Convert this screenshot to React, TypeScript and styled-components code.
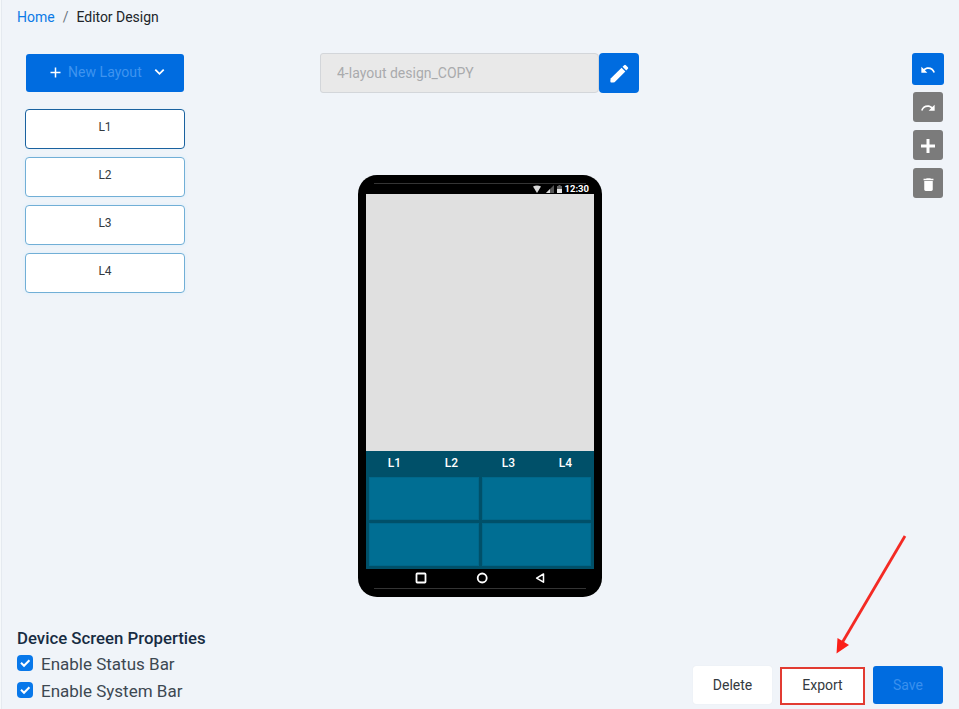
import React from "react";
import styled, { createGlobalStyle } from "styled-components";
import { MdUndo, MdRedo, MdDelete } from "react-icons/md";

const GlobalStyle = createGlobalStyle`
  * { box-sizing: border-box; }
  html, body { margin: 0; padding: 0; overflow: hidden; }
  body { background: #f0f4f9; }
  button, input { font-family: inherit; margin: 0; }
`;

const Page = styled.div`
  position: relative;
  width: 959px;
  height: 709px;
  display: flex;
  flex-direction: column;
  overflow: hidden;
  background: #f0f4f9;
  border-left: 1px solid #f6f9fb;
  box-shadow: inset 1px 0 0 #e5eaf0;
  font-family: Roboto, "Liberation Sans", sans-serif;
  color: #212529;
`;

const Breadcrumb = styled.nav`
  height: 53px;
  padding: 8px 0 0 16px;
  display: flex;
  gap: 8px;
  font-size: 14px;
  line-height: 19px;
`;

const HomeLink = styled.a`
  color: #0b7ae6;
`;

const Slash = styled.span`
  color: #6c757d;
`;

const CurrentPage = styled.span`
  letter-spacing: -0.03px;
`;

const Workspace = styled.main`
  display: grid;
  grid-template-columns: 319px 319px 1fr;
  height: 573px;
`;

const LayoutColumn = styled.aside`
  display: flex;
  flex-direction: column;
  gap: 8px;
  padding-left: 24px;
`;

const NewLayoutButton = styled.button`
  width: 158px;
  height: 38px;
  margin: 1px 1px 9px;
  padding: 0 19px 2px 24px;
  display: flex;
  align-items: center;
  border: 0;
  border-radius: 3px;
  background: #006ce0;
  color: #3f94ef;
  font-size: 14px;
  letter-spacing: 0.05px;
`;

const NewLayoutText = styled.span`
  flex: 1;
  padding: 0 0 0 7px;
  text-align: left;
  white-space: nowrap;
`;

const LayoutButton = styled.button<{ $selected?: boolean }>`
  width: 160px;
  height: 40px;
  padding: 0 0 4px;
  border: 1px solid ${(p) => (p.$selected ? "#1a629f" : "#71afd6")};
  border-radius: 4px;
  background: #fff;
  box-shadow: 0 0 4px ${(p) => (p.$selected ? "#e7f3fc" : "#dceffc")};
  color: #343a40;
  font-size: 12px;
`;

const Center = styled.section`
  display: flex;
  flex-direction: column;
  align-items: center;
`;

const NameBar = styled.div`
  display: flex;
  width: 319px;
  height: 40px;
`;

const NameInput = styled.input`
  width: 279px;
  height: 40px;
  padding: 0 16px 1px;
  border: 1px solid #d3d6da;
  border-radius: 3px 4px 4px 3px;
  background: #e9e9e9;
  color: #a9abad;
  font-size: 14px;
`;

const EditButton = styled.button`
  width: 40px;
  height: 40px;
  padding: 0;
  display: grid;
  place-items: center;
  border: 0;
  border-radius: 4px;
  background: #006ce0;
`;

const Phone = styled.div`
  width: 244px;
  height: 422px;
  margin: 82px 0 0 1px;
  padding: 8px;
  display: flex;
  flex-direction: column;
  border-radius: 19px;
  background: #000;
`;

const StatusBar = styled.div`
  height: 11px;
  padding-right: 5px;
  display: flex;
  justify-content: flex-end;
  align-items: center;
  background: linear-gradient(#343434, #343434) center top / 212px 1px no-repeat;
  color: #fff;
  font-size: 9.5px;
  font-weight: 700;
  line-height: 11px;
`;

const Clock = styled.span`
  margin-left: 1px;
`;

const Canvas = styled.div`
  height: 257px;
  background: #e0e0e0;
`;

const KeyArea = styled.div`
  height: 118px;
  background: #005069;
`;

const TabRow = styled.div`
  height: 26px;
  padding-bottom: 2px;
  display: grid;
  grid-template-columns: repeat(4, 1fr);
  align-items: center;
  text-align: center;
  color: #fff;
  font-size: 12px;
  font-weight: 500;
`;

const KeyGrid = styled.div`
  height: 89px;
  padding: 0 3px;
  display: grid;
  grid-template-columns: 1fr 1fr;
  grid-template-rows: 43px 43px;
  gap: 3px;
`;

const Key = styled.div`
  background: #006e93;
  border: 1px solid #00678a;
`;

const SystemBar = styled.div`
  height: 20px;
  padding: 0 48px 2px 49px;
  display: flex;
  justify-content: space-between;
  align-items: center;
  background: linear-gradient(#343434, #343434) center bottom / 212px 1px no-repeat;
`;

const Tools = styled.aside`
  display: flex;
  flex-direction: column;
  align-items: flex-end;
  gap: 8px;
  padding-right: 16px;
`;

const ToolButton = styled.button<{ $primary?: boolean }>`
  width: ${(p) => (p.$primary ? 32 : 30)}px;
  height: ${(p) => (p.$primary ? 32 : 30)}px;
  margin: ${(p) => (p.$primary ? "0 -1px -1px 0" : "0")};
  padding: 2px 0 0;
  display: grid;
  place-items: center;
  border: 0;
  border-radius: 3px;
  background: ${(p) => (p.$primary ? "#006ce0" : "#7b7b7b")};
  color: #fff;
`;

const Footer = styled.footer`
  height: 83px;
  padding: 0 16px;
  display: flex;
  justify-content: space-between;
`;

const Properties = styled.section`
  display: flex;
  flex-direction: column;
`;

const PropertiesTitle = styled.h2`
  margin: 0;
  color: #172c43;
  font-size: 16.8px;
  font-weight: 500;
  line-height: 25px;
`;

const CheckRow = styled.label`
  height: 26.5px;
  display: flex;
  align-items: center;
  gap: 8px;
  color: #3d4852;
  font-size: 17px;
  line-height: 26px;
`;

const CheckBox = styled.span`
  width: 16px;
  height: 16px;
  margin-bottom: 2px;
  display: grid;
  place-items: center;
  border-radius: 4px;
  background: #0878ea;
`;

const Actions = styled.div`
  display: flex;
  gap: 8px;
  padding-top: 40px;
`;

const ActionButton = styled.button<{ $kind: "plain" | "marked" | "save" }>`
  width: ${(p) => ({ plain: 79, marked: 85, save: 70 })[p.$kind]}px;
  height: 38px;
  margin-top: ${(p) => (p.$kind === "marked" ? 1 : 0)}px;
  padding: 0 0 ${(p) => (p.$kind === "marked" ? 2 : 0)}px;
  border: ${(p) => (p.$kind === "marked" ? "2px solid #e23b32" : "0")};
  border-radius: ${(p) => (p.$kind === "marked" ? 0 : 3)}px;
  background: ${(p) => (p.$kind === "save" ? "#006ce0" : "#fff")};
  box-shadow: ${(p) => (p.$kind === "plain" ? "0 0 1px #d9dee4" : "none")};
  color: ${(p) => (p.$kind === "save" ? "#3990ee" : "#343a40")};
  font-size: 14px;
`;

const Pointer = styled.svg`
  position: absolute;
  left: 829px;
  top: 530px;
`;

const CheckMark = () => (
  <CheckBox>
    <svg width="16" height="16" viewBox="0 0 16 16">
      <path d="M4 7.8 7 10.8 12.4 5.2" fill="none" stroke="#fff" strokeWidth="2" />
    </svg>
  </CheckBox>
);

export default function App() {
  return (
    <>
      <GlobalStyle />
      <Page>
        <Breadcrumb>
          <HomeLink>Home</HomeLink>
          <Slash>/</Slash>
          <CurrentPage>Editor Design</CurrentPage>
        </Breadcrumb>

        <Workspace>
          <LayoutColumn>
            <NewLayoutButton>
              <svg width="11" height="11" viewBox="0 0 11 11">
                <path d="M5.5 .5v10M.5 5.5h10" stroke="#fff" strokeWidth="1.5" />
              </svg>
              <NewLayoutText>New Layout</NewLayoutText>
              <svg width="11" height="8" viewBox="0 0 11 8">
                <path d="M1.3 1.7 5.500 5.800 9.700 1.700" fill="none" stroke="#fff" strokeWidth="1.8" />
              </svg>
            </NewLayoutButton>
            {["L1", "L2", "L3", "L4"].map((name, i) => (
              <LayoutButton key={name} $selected={i === 0}>
                {name}
              </LayoutButton>
            ))}
          </LayoutColumn>

          <Center>
            <NameBar>
              <NameInput value="4-layout design_COPY" disabled readOnly />
              <EditButton>
                <svg width="19" height="19" viewBox="0 0 20 20" fill="#fff">
                  <path d="M.6 19.1Q0 18.3.7 15.2L12.2 3.9l3.9 3.9L4.8 19.1Q1.7 20 .6 19.1z" />
                  <path d="m13.2 2.9 1.7-1.7q.9-.9 1.8 0l2.1 2.1q.9.9 0 1.8l-1.7 1.7z" />
                </svg>
              </EditButton>
            </NameBar>

            <Phone>
              <StatusBar>
                <svg width="31" height="10" viewBox="0 0 31 10">
                  <path d="M0 2.5Q4 .3 8 2.5L4 9z" fill="#d8d8d8" />
                  <path d="M21 1v8h-8z" fill="#555" />
                  <path d="M17 5v4h-4z" fill="#ddd" />
                  <path d="M24 2h1.5V1h2v1H29v3h-5z" fill="#666" />
                  <path d="M24 5h5v4h-5z" fill="#e8e8e8" />
                </svg>
                <Clock>12:30</Clock>
              </StatusBar>
              <Canvas />
              <KeyArea>
                <TabRow>
                  <span>L1</span>
                  <span>L2</span>
                  <span>L3</span>
                  <span>L4</span>
                </TabRow>
                <KeyGrid>
                  <Key />
                  <Key />
                  <Key />
                  <Key />
                </KeyGrid>
              </KeyArea>
              <SystemBar>
                <svg width="12" height="12" viewBox="0 0 12 12">
                  <rect x="1.5" y="1.5" width="9" height="9" rx=".7" fill="none" stroke="#fff" strokeWidth="1.8" />
                </svg>
                <svg width="14" height="12" viewBox="0 0 14 12">
                  <circle cx="8.200" cy="6" r="4.5" fill="none" stroke="#fff" strokeWidth="1.8" />
                </svg>
                <svg width="12" height="12" viewBox="0 0 12 12">
                  <path d="M9.5 2v8.2L2.6 6.1z" fill="none" stroke="#fff" strokeWidth="1.5" strokeLinejoin="round" />
                </svg>
              </SystemBar>
            </Phone>
          </Center>

          <Tools>
            <ToolButton $primary>
              <MdUndo size={16} />
            </ToolButton>
            <ToolButton>
              <MdRedo size={16} />
            </ToolButton>
            <ToolButton>
              <svg width="14" height="14" viewBox="0 0 14 14">
                <path d="M7 0v14M0 7h14" stroke="#fff" strokeWidth="3" />
              </svg>
            </ToolButton>
            <ToolButton>
              <MdDelete size={17} />
            </ToolButton>
          </Tools>
        </Workspace>

        <Footer>
          <Properties>
            <PropertiesTitle>Device Screen Properties</PropertiesTitle>
            <CheckRow>
              <CheckMark />
              Enable Status Bar
            </CheckRow>
            <CheckRow>
              <CheckMark />
              Enable System Bar
            </CheckRow>
          </Properties>
          <Actions>
            <ActionButton $kind="plain">Delete</ActionButton>
            <ActionButton $kind="marked">Export</ActionButton>
            <ActionButton $kind="save">Save</ActionButton>
          </Actions>
        </Footer>

        <Pointer width="84" height="130" viewBox="0 0 84 130">
          <path d="M75 6 12 113" stroke="#f42a24" strokeWidth="2.8" />
          <path d="M6.500 123.500 7.500 108 19 115z" fill="#fb1f18" />
        </Pointer>
      </Page>
    </>
  );
}
